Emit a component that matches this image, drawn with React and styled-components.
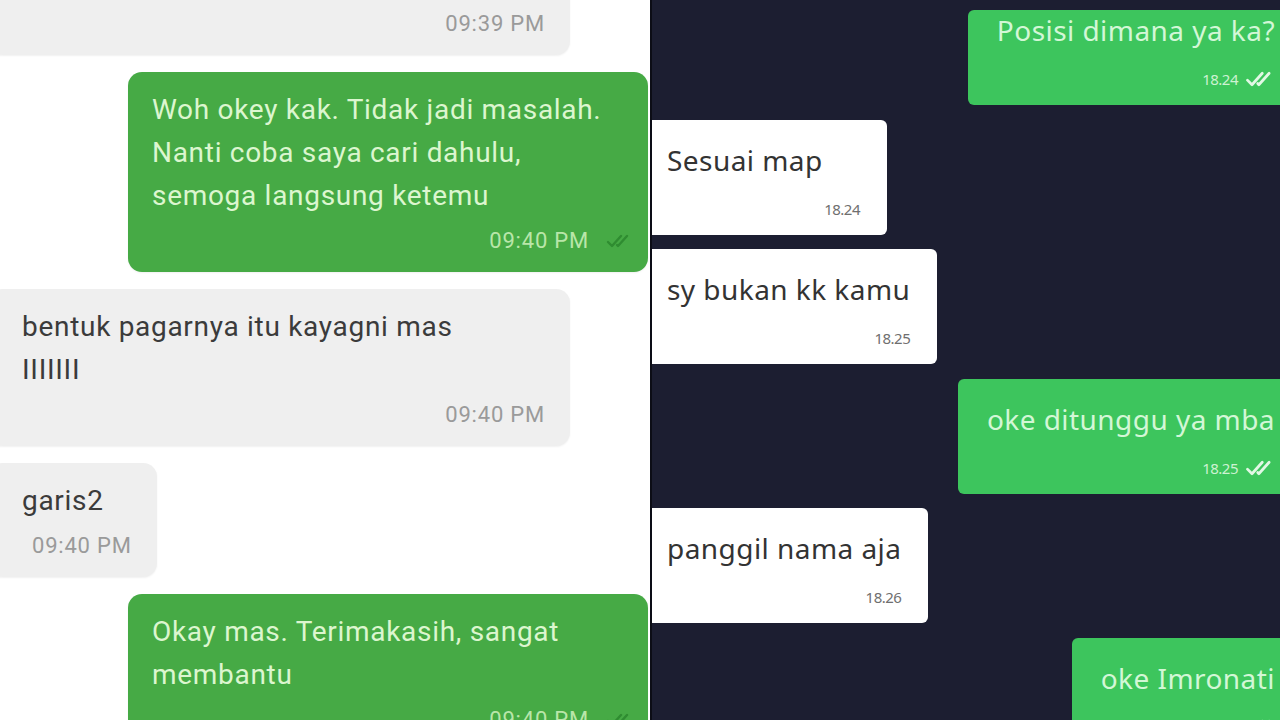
import React from "react";
import styled, { createGlobalStyle } from "styled-components";

const GlobalStyle = createGlobalStyle`
  html, body { margin: 0; padding: 0; background: #ffffff; overflow: hidden; }
  * { box-sizing: border-box; }
`;

const Page = styled.div`
  display: flex;
  width: 1280px;
  height: 720px;
  overflow: hidden;
`;

/* ---------- Left screenshot (light chat) ---------- */
const LeftPanel = styled.div`
  width: 650px;
  height: 720px;
  flex: none;
  background: #ffffff;
  overflow: hidden;
  display: flex;
  flex-direction: column;
  gap: 17px;
  font-family: Roboto, "Liberation Sans", sans-serif;
`;

const LBubble = styled.div`
  display: flex;
  flex-direction: column;
  border-radius: 14px;
  background: ${(p) => (p.$out ? "#46aa45" : "#efefef")};
  color: ${(p) => (p.$out ? "#dcf6cf" : "#3b3b3b")};
  align-self: ${(p) => (p.$out ? "flex-end" : "flex-start")};
  width: ${(p) => (p.$w ? p.$w + "px" : "auto")};
  margin: ${(p) => (p.$out ? "0 2px 0 0" : "0 0 0 -12px")};
  margin-top: ${(p) => (p.$top ? p.$top + "px" : "0")};
  padding: ${(p) =>
    p.$out ? "16px 16px 19px 24px" : p.$pt ? `${p.$pt}px 25px 19px 34px` : "16px 25px 19px 34px"};
  box-shadow: 0 1px 2px rgba(0, 0, 0, 0.06);
  flex: none;
`;

const LText = styled.div`
  font-size: 28px;
  line-height: 43px;
  letter-spacing: 0.7px;
  white-space: pre-line;
`;

const LMeta = styled.div`
  display: flex;
  align-items: center;
  justify-content: flex-end;
  gap: 17px;
  margin-top: ${(p) => (p.$noText ? "0" : "12px")};
  padding-left: ${(p) => (p.$indent ? p.$indent + "px" : "0")};
  font-size: 22px;
  line-height: 24px;
  letter-spacing: 0.8px;
  color: ${(p) => (p.$out ? "#b9e6a9" : "#9a9a9a")};
`;

/* ---------- Right screenshot (dark chat) ---------- */
const RightPanel = styled.div`
  flex: 1;
  height: 720px;
  background: #1c1e31;
  border-left: 2px solid #0c0d16;
  overflow: hidden;
  display: flex;
  flex-direction: column;
  gap: 14.5px;
  padding-top: 10px;
  font-family: "Noto Sans", "Open Sans", sans-serif;
`;

const RBubble = styled.div`
  display: flex;
  flex-direction: column;
  flex: none;
  border-radius: 6px;
  background: ${(p) => (p.$out ? "#3dc55d" : "#ffffff")};
  color: ${(p) => (p.$out ? "#d3f7d6" : "#333333")};
  align-self: ${(p) => (p.$out ? "flex-end" : "flex-start")};
  margin: ${(p) => (p.$out ? "0 -24px 0 0" : "0 0 0 -14px")};
  padding: ${(p) => (p.$out ? "20px 29px 16px 29px" : "20px 27px 16px 29px")};
  padding-top: ${(p) => (p.$flush ? "0" : "20px")};
  min-width: ${(p) => (p.$min ? p.$min + "px" : "0")};
`;

const RText = styled.div`
  font-size: 28px;
  line-height: 40px;
  letter-spacing: 0.45px;
  white-space: nowrap;
`;

const RMeta = styled.div`
  display: flex;
  align-items: center;
  justify-content: flex-end;
  gap: 7px;
  margin-top: 19px;
  font-size: 15px;
  line-height: 20px;
  letter-spacing: -0.5px;
  color: ${(p) => (p.$out ? "#cdf2d2" : "#6f6f6f")};
`;

const Ticks = ({ color, w = 26, h = 14 }) => (
  <svg width={w} height={h} viewBox="0 0 26 14" fill="none">
    <path d="M2 8 L6 12 L15 2" stroke={color} strokeWidth="2.4" strokeLinecap="round" strokeLinejoin="round" />
    <path d="M11 11 L12 12 L21 2" stroke={color} strokeWidth="2.4" strokeLinecap="round" strokeLinejoin="round" />
  </svg>
);

export default function App() {
  return (
    <>
      <GlobalStyle />
      <Page>
        <LeftPanel>
          <LBubble $w={582} $top={-30} $pt={42}>
            <LMeta $noText>09:39 PM</LMeta>
          </LBubble>

          <LBubble $out $w={520}>
            <LText>
              {"Woh okey kak. Tidak jadi masalah.\nNanti coba saya cari dahulu,\nsemoga langsung ketemu"}
            </LText>
            <LMeta $out>
              09:40 PM
              <Ticks color="#2f8c31" />
            </LMeta>
          </LBubble>

          <LBubble $w={582}>
            <LText>{"bentuk pagarnya itu kayagni mas\nIIIIIII"}</LText>
            <LMeta>09:40 PM</LMeta>
          </LBubble>

          <LBubble>
            <LText>garis2</LText>
            <LMeta $indent={10}>09:40 PM</LMeta>
          </LBubble>

          <LBubble $out $w={520}>
            <LText>{"Okay mas. Terimakasih, sangat\nmembantu"}</LText>
            <LMeta $out>
              09:40 PM
              <Ticks color="#2f8c31" />
            </LMeta>
          </LBubble>
        </LeftPanel>

        <RightPanel>
          <RBubble $out $flush>
            <RText>Posisi dimana ya ka?</RText>
            <RMeta $out>
              18.24
              <Ticks color="#e2f8e5" w={30} h={16} />
            </RMeta>
          </RBubble>

          <RBubble $min={249}>
            <RText>Sesuai map</RText>
            <RMeta>18.24</RMeta>
          </RBubble>

          <RBubble>
            <RText>sy bukan kk kamu</RText>
            <RMeta>18.25</RMeta>
          </RBubble>

          <RBubble $out>
            <RText>oke ditunggu ya mba</RText>
            <RMeta $out>
              18.25
              <Ticks color="#e2f8e5" w={30} h={16} />
            </RMeta>
          </RBubble>

          <RBubble>
            <RText>panggil nama aja</RText>
            <RMeta>18.26</RMeta>
          </RBubble>

          <RBubble $out>
            <RText>oke Imronati</RText>
            <RMeta $out>
              18.26
              <Ticks color="#e2f8e5" w={30} h={16} />
            </RMeta>
          </RBubble>
        </RightPanel>
      </Page>
    </>
  );
}
